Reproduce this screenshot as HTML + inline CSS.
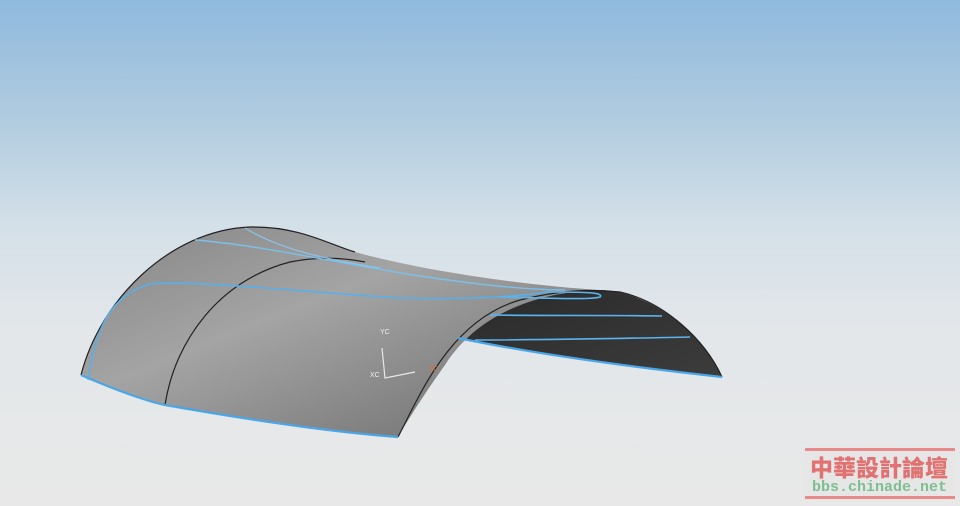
<!DOCTYPE html>
<html><head><meta charset="utf-8"><style>
html,body{margin:0;padding:0}
body{width:960px;height:506px;overflow:hidden;background:linear-gradient(180deg,#8fb9dd 0%,#b3cde0 25%,#d4e0e8 45%,#e3e7ea 65%,#e8e8e8 100%);position:relative;font-family:"Liberation Sans",sans-serif}
svg{position:absolute;left:0;top:0}
.wm{position:absolute;left:803px;top:447px;width:152px;height:53px;background:#e6e6e6}
.wm .l1{position:absolute;left:2px;right:0;top:1px;height:3px;background:#e88a8a}
.wm .l2{position:absolute;left:2px;right:0;bottom:1px;height:3px;background:#e88a8a}
.wm .t1{position:absolute;left:7px;top:5px;font:900 23px "Noto Sans CJK TC","WenQuanYi Zen Hei",sans-serif;color:#e07272;line-height:28px}
.wm .t2{position:absolute;left:9px;top:33px;font:bold 15px "Liberation Mono",monospace;color:#7fbf8f;line-height:15px}
</style></head><body>
<svg width="960" height="506" viewBox="0 0 960 506">
<defs>
<linearGradient id="g1" x1="0" y1="0" x2="1" y2="1">
<stop offset="0" stop-color="#858585"/><stop offset="0.4" stop-color="#a4a4a4"/><stop offset="1" stop-color="#6a6a6a"/>
</linearGradient>
<linearGradient id="g2" x1="0" y1="0" x2="1" y2="1">
<stop offset="0" stop-color="#2a2a2a"/><stop offset="1" stop-color="#3c3c3c"/>
</linearGradient>
</defs>
<path d="M458,338 C490,310 540,290 600,290 C650,292 700,330 722,377 C640,368 540,355 458,338 Z" fill="url(#g2)"/>
<path d="M81,375 C100,300 170,230 250,227 C300,226 330,245 355,252 C420,270 520,285 600,290 C530,292 475,318 445,365 C420,400 405,425 398,437 C300,430 200,410 165,405 C130,395 95,380 81,375 Z" fill="url(#g1)"/>
<path d="M81,375 C100,300 170,230 250,227 C300,226 330,245 355,252" fill="none" stroke="#222" stroke-width="1.2"/>
<path d="M398,437 C420,395 450,320 520,300 C560,290 590,289 620,292 C665,302 705,340 722,377" fill="none" stroke="#222" stroke-width="1.2"/>
<path d="M165,405 C175,340 220,280 290,262 C320,256 345,258 365,262" fill="none" stroke="#222" stroke-width="1.2"/>
<path d="M81,375 C120,392 150,402 165,405 C250,420 330,432 398,437" fill="none" stroke="#4aa6e6" stroke-width="2.2"/>
<path d="M458,338 C540,355 640,368 722,377" fill="none" stroke="#4aa6e6" stroke-width="2.2"/>
<path d="M88,380 C95,330 110,295 150,284 C200,280 300,292 400,298 C470,300 520,296 548,292" fill="none" stroke="#58b0ea" stroke-width="1.6"/>
<path d="M195,240 C260,245 330,262 420,276 C480,285 530,290 565,290" fill="none" stroke="#7cc0ea" stroke-width="1.4"/>
<path d="M245,228 C280,250 330,260 380,268" fill="none" stroke="#88c4ea" stroke-width="1.2"/>
<path d="M545,292 C580,292 605,292 600,297 C590,300 550,298 500,297" fill="none" stroke="#5ab4ee" stroke-width="1.6"/>
<path d="M490,315 C560,316 620,315 662,316" fill="none" stroke="#5ab4ee" stroke-width="1.6"/>
<path d="M475,340 C560,340 640,338 690,337" fill="none" stroke="#5ab4ee" stroke-width="1.6"/>
<path d="M382,348 L385,378 L415,372" fill="none" stroke="#e8e8e8" stroke-width="1.2"/>
<text x="380" y="334" font-size="7" fill="#eee" font-family="Liberation Sans">YC</text>
<text x="370" y="377" font-size="7" fill="#eee" font-family="Liberation Sans">XC</text>
<text x="429" y="371" font-size="7" fill="#e07030" font-family="Liberation Sans">ZC</text>
</svg>
<div class="wm"><div class="l1"></div><div class="l2"></div>
<div class="t1">中華設計論壇</div>
<div class="t2">bbs.chinade.net</div></div>
</body></html>
